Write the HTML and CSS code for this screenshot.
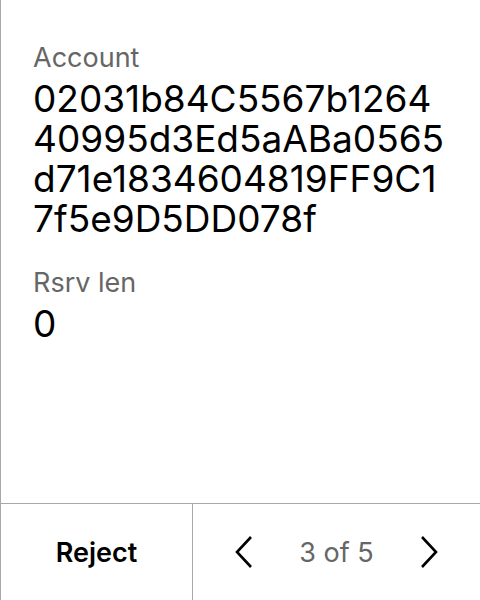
FILE: index.html
```html
<!DOCTYPE html>
<html>
<head>
<meta charset="utf-8">
<link rel="stylesheet" href="styles.css">
</head>
<body>
<div class="screen">
  <main class="content">
    <div class="field">
      <div class="label">Account</div>
      <div class="value">02031b84C5567b1264<br>40995d3Ed5aABa0565<br>d71e1834604819FF9C1<br>7f5e9D5DD078f</div>
    </div>
    <div class="field">
      <div class="label">Rsrv len</div>
      <div class="value">0</div>
    </div>
  </main>
  <footer class="footer">
    <div class="reject">Reject</div>
    <div class="nav">
      <svg class="chev" width="20" height="34" viewBox="0 0 20 34"><path d="M17 2 L3 17 L17 32" fill="none" stroke="#000" stroke-width="2.6"/></svg>
      <span class="page">3 of 5</span>
      <svg class="chev" width="20" height="34" viewBox="0 0 20 34"><path d="M3 2 L17 17 L3 32" fill="none" stroke="#000" stroke-width="2.6"/></svg>
    </div>
  </footer>
</div>
</body>
</html>
```
FILE: styles.css
```css
html, body {
  margin: 0;
  padding: 0;
  background: #fff;
}
body {
  font-family: Inter, "Noto Sans", sans-serif;
  color: #000;
}
.screen {
  width: 480px;
  height: 600px;
  box-sizing: border-box;
  border-left: 1px solid #a8a8a8;
  display: flex;
  flex-direction: column;
}
.content {
  flex: 1;
  padding: 41px 0 0 32px;
  display: flex;
  flex-direction: column;
  gap: 27px;
}
.label {
  font-size: 27px;
  line-height: 34px;
  color: #666;
}
.value {
  font-size: 37px;
  line-height: 40px;
  margin-top: 4px;
  color: #000;
}
.footer {
  height: 96px;
  border-top: 1px solid #a8a8a8;
  display: flex;
}
.reject {
  width: 191px;
  border-right: 1px solid #a8a8a8;
  display: flex;
  align-items: center;
  justify-content: center;
  font-size: 27px;
  font-weight: 600;
}
.nav {
  flex: 1;
  display: flex;
  align-items: center;
  justify-content: center;
  gap: 45px;
}
.page {
  font-size: 27px;
  color: #666;
}
.chev {
  display: block;
}
```
